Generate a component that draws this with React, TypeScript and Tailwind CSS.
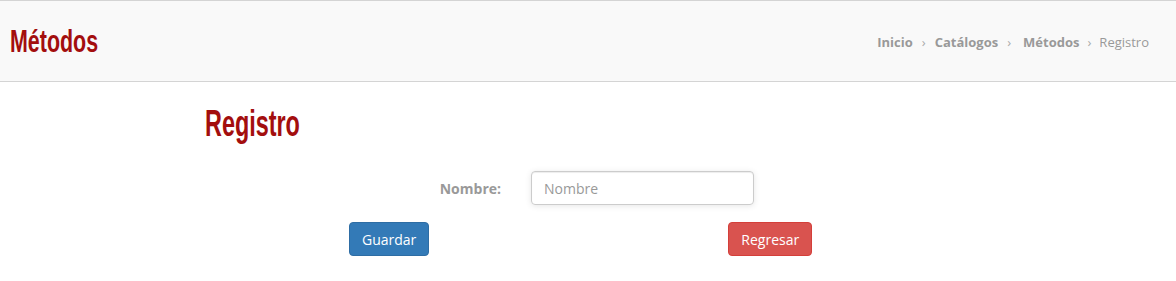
export default function App() {
  return (
    <div className="min-h-[281px] bg-white font-['Open_Sans',sans-serif] text-[14px] text-[#333]">
      {/* Cabecera */}
      <div className="flex h-[82px] items-center justify-between border-y border-[#d4d4d4] bg-[#f9f9f9] pl-[10px] pr-[27px]">
        <h1 className="origin-left scale-x-[0.67] font-['Liberation_Sans',sans-serif] text-[32px] font-bold leading-none text-[#a30e0e]">
          Métodos
        </h1>
        <nav className="flex items-center pt-[3px] text-[13px] text-[#999]">
          <span className="font-bold">Inicio</span>
          <span className="px-[9px] text-[#aaa]">›</span>
          <span className="font-bold">Catálogos</span>
          <span className="pl-[9px] pr-[12px] text-[#aaa]">›</span>
          <span className="font-bold">Métodos</span>
          <span className="px-[8px] text-[#aaa]">›</span>
          <span>Registro</span>
        </nav>
      </div>

      <div className="pl-[205px]">
        <h2 className="mt-[22px] inline-block origin-left scale-x-[0.65] font-['Liberation_Sans',sans-serif] text-[36px] font-bold leading-[40px] text-[#a30e0e]">
          Registro
        </h2>

        {/* Formulario */}
        <div className="mt-[27px] flex items-center">
          <label className="w-[296px] text-right font-bold text-[#999]">Nombre:</label>
          <input
            placeholder="Nombre"
            className="ml-[30px] h-[34px] w-[223px] rounded-[4px] border border-[#ccc] px-[12px] text-[14px] text-[#555] shadow-[inset_0_1px_1px_rgba(0,0,0,0.075),0_1px_6px_rgba(0,0,0,0.1)] outline-none placeholder:text-[#999]"
          />
        </div>

        <div className="mt-[17px] flex items-center">
          <button className="ml-[144px] h-[34px] rounded-[4px] border border-[#2e6da4] bg-[#337ab7] px-[12px] text-white">
            Guardar
          </button>
          <button className="ml-[299px] h-[34px] rounded-[4px] border border-[#d43f3a] bg-[#d9534f] px-[12px] text-white">
            Regresar
          </button>
        </div>
      </div>
    </div>
  )
}
